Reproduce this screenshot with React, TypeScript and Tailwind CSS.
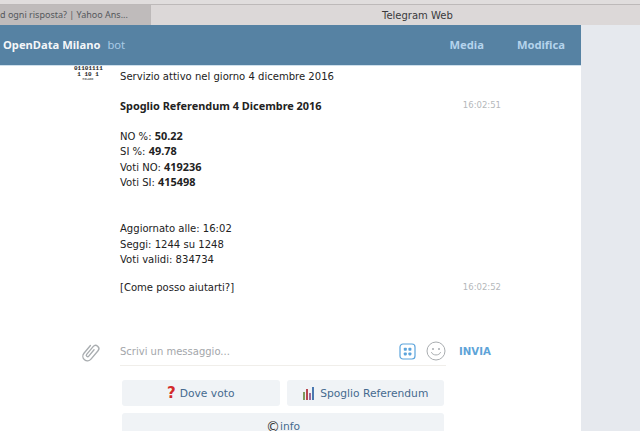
import React from "react";

const Stamp = ({ children }: { children: string }) => (
  <span className="ml-auto mr-[80px] text-[8.5px] font-normal text-[#b5b8bb]">{children}</span>
);

const Bold = ({ children }: { children: string }) => (
  <b className="font-['Noto_Sans',sans-serif] text-[10.9px] font-bold leading-[14px]">{children}</b>
);

const App = () => {
  return (
    <div className="flex h-[431px] w-[640px] flex-col overflow-hidden bg-[#e6e9ee] font-['DejaVu_Sans',sans-serif]">
      {/* browser chrome */}
      <div className="h-[5px] shrink-0 border-b border-[#bdb9b9] bg-[#e0dddd]" />
      <div className="flex h-[20px] shrink-0 items-center bg-[#dcd8d8] text-[10px]">
        <div className="flex h-full w-[151px] items-center overflow-hidden whitespace-nowrap border-r border-[#bdb9b9] bg-[#bfbbbb] font-['Noto_Sans',sans-serif] text-[#55585c]">
          <span className="text-[9px]">d ogni risposta? | Yahoo Ans...</span>
        </div>
        <div className="flex-1 pl-[231px] text-[#3a3a3c]">Telegram Web</div>
      </div>

      <div className="flex min-h-0 flex-1">
        <main className="flex w-[581px] flex-col bg-white">
          <header className="flex h-[41px] shrink-0 items-center border-b border-[#cfe0ec] bg-[#5682a3] pl-[3px] font-['Noto_Sans',sans-serif] text-[11.2px] font-bold">
            <span className="text-white/95">OpenData Milano</span>
            <span className="ml-[7px] font-normal text-[#a9cbe6]">bot</span>
            <span className="ml-auto mr-[33px] text-[#b4d3ec]">Media</span>
            <span className="mr-[16px] text-[#b4d3ec]">Modifica</span>
          </header>

          <div className="relative flex-1 text-[10.05px] leading-[15.4px] text-[#222]">
            {/* bot avatar, cropped by the header */}
            <div className="absolute left-[74px] top-0 w-[28px] text-center font-['Liberation_Mono',monospace] text-[6px] font-bold leading-[6px] text-[#222]">
              <div>01101111</div>
              <div>1  10 1</div>
              <div className="text-[3px] leading-[3px] text-[#666]">MILANO</div>
            </div>

            <div className="pl-[120px] pt-[3px]">
              <p>Servizio attivo nel giorno 4 dicembre 2016</p>
              <div className="mt-[14px] flex items-center">
                <Bold>Spoglio Referendum 4 Dicembre 2016</Bold>
                <Stamp>16:02:51</Stamp>
              </div>
              <div className="mt-[15px]">
                <p>NO %: <Bold>50.22</Bold></p>
                <p>SI %: <Bold>49.78</Bold></p>
                <p>Voti NO: <Bold>419236</Bold></p>
                <p>Voti SI: <Bold>415498</Bold></p>
              </div>
              <div className="mt-[31px]">
                <p>Aggiornato alle: 16:02</p>
                <p>Seggi: 1244 su 1248</p>
                <p>Voti validi: 834734</p>
              </div>
              <div className="mt-[12px] flex items-center">
                <span>[Come posso aiutarti?]</span>
                <Stamp>16:02:52</Stamp>
              </div>
            </div>

            {/* composer */}
            <div className="mt-[43px] flex items-start">
              <svg className="ml-[80px] mt-[3px] h-[22px] w-[22px]" viewBox="0 0 24 24" fill="none" stroke="#a9adb0" strokeWidth="1.5" strokeLinecap="round" strokeLinejoin="round">
                <g transform="rotate(40 12 12)">
                  <path d="M7 7v11a5 5 0 0 0 10 0V6a3.5 3.5 0 0 0-7 0v11a1.5 1.5 0 0 0 3 0V8" />
                </g>
              </svg>
              <div className="ml-[18px] flex h-[28px] w-[326px] items-start border-b border-[#f0eeea]">
                <span className="mt-[6px] text-[10px] text-[#a3a6aa]">Scrivi un messaggio...</span>
                <svg className="ml-auto mt-[5px] h-[17px] w-[17px]" viewBox="0 0 17 17">
                  <rect x="1" y="1" width="15" height="15" rx="3" fill="#fff" stroke="#5ba4dc" strokeWidth="1.2" />
                  <rect x="4.8" y="4.8" width="3" height="3" rx="0.8" fill="#5ba4dc" />
                  <rect x="9.4" y="4.8" width="3" height="3" rx="0.8" fill="#5ba4dc" />
                  <rect x="4.8" y="9.4" width="3" height="3" rx="0.8" fill="#5ba4dc" />
                  <rect x="9.4" y="9.4" width="3" height="3" rx="0.8" fill="#5ba4dc" />
                </svg>
                <svg className="ml-[10px] mt-[3px] h-[20px] w-[20px]" viewBox="0 0 20 20" fill="none" stroke="#a9adb0" strokeWidth="1">
                  <circle cx="10" cy="10" r="9" />
                  <circle cx="7" cy="8" r="1" fill="#a9adb0" stroke="none" />
                  <circle cx="13" cy="8" r="1" fill="#a9adb0" stroke="none" />
                  <path d="M5.5 11.5c1 3.4 8 3.4 9 0" strokeLinecap="round" />
                </svg>
              </div>
              <span className="ml-[13px] mt-[6px] text-[10.2px] font-bold text-[#5ea4d8]">INVIA</span>
            </div>

            {/* keyboard */}
            <div className="ml-[122px] mt-[14px] grid w-[322px] grid-cols-2 gap-x-[7px] gap-y-[7px] text-[10.7px] text-[#456a8f]">
              <button className="flex h-[26px] items-center justify-center rounded-[3px] bg-[#f0f3f6] pt-[1px]">
                <span className="mr-[4px] text-[15px] font-bold leading-none text-[#d32b2b]">?</span>
                <span>Dove voto</span>
              </button>
              <button className="flex h-[26px] items-center justify-center gap-[5px] rounded-[3px] bg-[#f0f3f6] pt-[1px]">
                <svg className="h-[13px] w-[13px]" viewBox="0 0 13 13">
                  <rect x="1" y="5" width="2" height="8" fill="#7f9a5e" />
                  <rect x="4" y="2" width="2" height="11" fill="#b8474f" />
                  <rect x="7" y="6" width="2" height="7" fill="#9a6a9a" />
                  <rect x="10" y="0" width="2" height="13" fill="#4a78b0" />
                </svg>
                <span>Spoglio Referendum</span>
              </button>
              <button className="col-span-2 flex h-[26px] items-center justify-center rounded-[3px] bg-[#f0f3f6] pt-[1px]">
                <span className="text-[14px] leading-none text-[#333]">©</span>
                <span>info</span>
              </button>
            </div>
          </div>
        </main>
      </div>
    </div>
  );
};

export default App;
